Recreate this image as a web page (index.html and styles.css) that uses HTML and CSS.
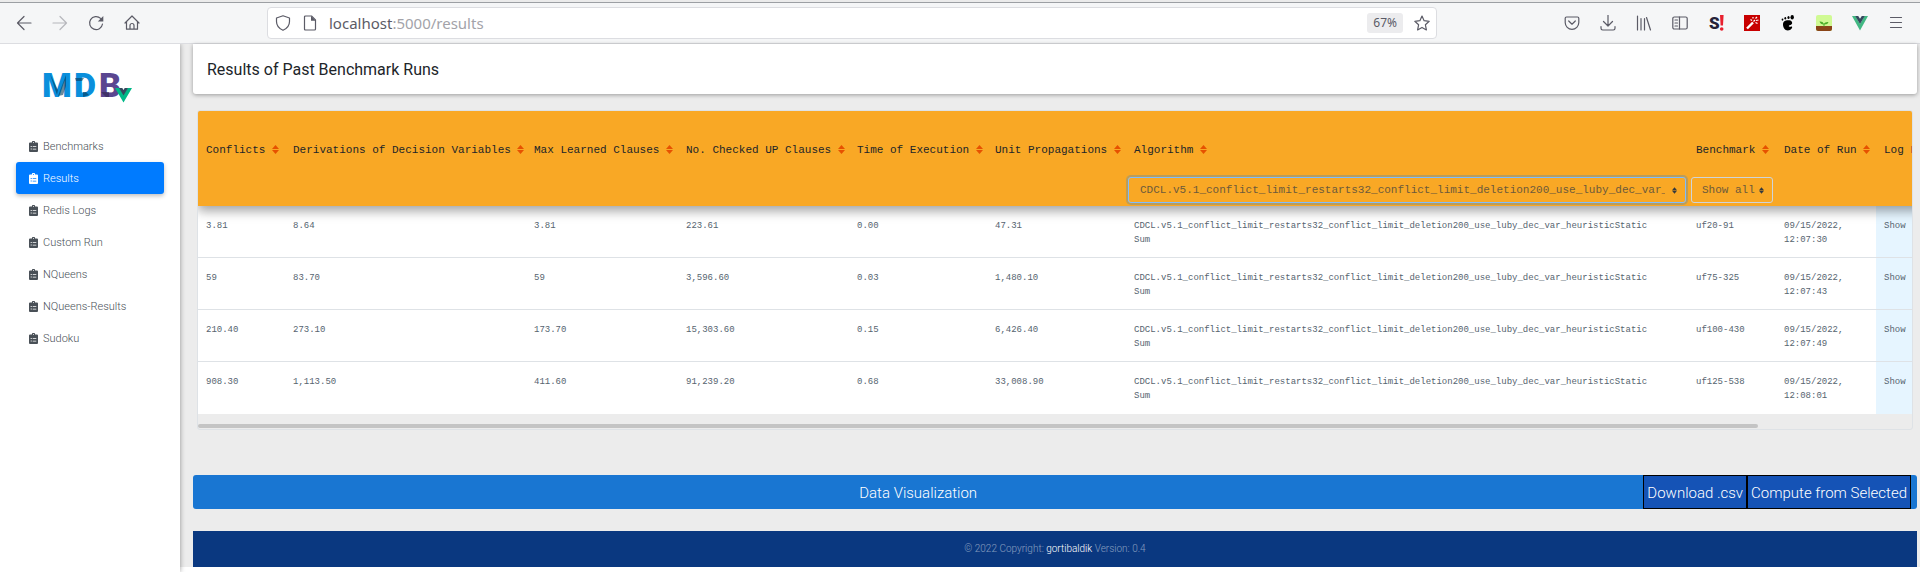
FILE: index.html
```
<!DOCTYPE html>
<html lang="en">
<head>
<meta charset="utf-8">
<title>Results of Past Benchmark Runs</title>
<link rel="stylesheet" href="styles.css">
</head>
<body>
<svg class="defs" aria-hidden="true">
  <symbol id="clip" viewBox="0 0 9 11"><path fill-rule="evenodd" d="M1 1.4h1.9a1.6 1.6 0 0 1 3.2 0H8a1 1 0 0 1 1 1V10a1 1 0 0 1-1 1H1a1 1 0 0 1-1-1V2.4a1 1 0 0 1 1-1zM4.5.9a.5.5 0 1 0 0 1 .5.5 0 0 0 0-1zM1.7 5v.9h1V5zm2 0v.8h3.6V5zm-2 2.6v.9h1v-.9zm2 .1v.8h3.6v-.8z"/></symbol>
  <symbol id="sort" viewBox="0 0 7 9"><path d="M0 4 3.5 0 7 4zM0 5h7L3.5 9z"/></symbol>
</svg>
<header class="toolbar">
  <nav class="tools" aria-label="Browser">
    <button class="tool" aria-label="Back"><svg class="ico" viewBox="0 0 16 16"><path d="M15 8H1.5M8 1.5 1.5 8 8 14.5"/></svg></button>
    <button class="tool dim" aria-label="Forward"><svg class="ico" viewBox="0 0 16 16"><path d="M1 8h13.500M8 1.500 14.500 8 8 14.500"/></svg></button>
    <button class="tool" aria-label="Reload"><svg class="ico" viewBox="0 0 16 16"><path d="M14.500 9A6.500 6.500 0 1 1 12.600 3.400"/><path class="solid" d="M15.300 1v5.500H9.800z"/></svg></button>
    <button class="tool" aria-label="Home"><svg class="ico" viewBox="0 0 16 16"><path d="M1 8 8 1l7 7M2.500 7v7.200h11V7M6 14V10.500a2 2 0 0 1 4 0V14"/></svg></button>
  </nav>
  <div class="urlbar">
    <svg class="ico" viewBox="0 0 16 16"><path d="M8 .8 14.500 3v3.500c0 4-2.500 7-6.500 8.800C4 13.500 1.500 10.500 1.500 6.500V3z"/></svg>
    <svg class="ico" viewBox="0 0 16 16"><path d="M3.500 1h6L13.500 5v9q0 1-1 1h-9q-1 0-1-1V2q0-1 1-1z"/><path class="solid" d="M9 1v4.700h4.500z"/></svg>
    <span class="url"><span class="host">localhost</span>:5000/results</span>
    <span class="zoom">67%</span>
    <svg class="ico" viewBox="0 0 16 16"><path d="m8 1 2.100 4.700 5.100.6-3.800 3.500 1 5.100L8 12.400l-4.400 2.500 1-5.100L.8 6.300l5.100-.6z"/></svg>
  </div>
  <nav class="tools" aria-label="Extensions">
    <button class="tool" aria-label="Pocket"><svg class="ico" viewBox="0 0 16 16"><path d="M2.500 2h11q1.300 0 1.300 1.300V7.500a6.800 6.800 0 0 1-13.600 0V3.300Q1.200 2 2.500 2zM4.700 6 8 9.200 11.300 6"/></svg></button>
    <button class="tool" aria-label="Downloads"><svg class="ico" viewBox="0 0 16 16"><path d="M8 0v10.500M3.500 6.500 8 11l4.500-4.500M1 11.500v1.800q0 1.700 1.700 1.700h10.600q1.700 0 1.700-1.700v-1.800"/></svg></button>
    <button class="tool" aria-label="Library"><svg class="ico" viewBox="0 0 16 16"><path d="M1.500 1v14M5 3.500V15M8.500 3.500V15M10.500 2.500l4 12.500"/></svg></button>
    <button class="tool" aria-label="Sidebars"><svg class="ico" viewBox="0 0 16 16"><rect x=".8" y="2" width="14.400" height="12" rx="1.500"/><path d="M7.500 2v12M3 5h2.500M3 8h2.500M3 11h2.500"/></svg></button>
    <button class="tool" aria-label="S extension"><svg class="pic" viewBox="0 0 16 16"><text x="1" y="14" class="ess">S</text><path fill="#e8202e" d="M12 0h3.600l-.6 10.500h-2.400zM11.900 14a1.800 1.800 0 1 0 3.600 0 1.800 1.800 0 0 0-3.600 0z"/></svg></button>
    <button class="tool" aria-label="Wand"><svg class="pic" viewBox="0 0 16 16"><path fill="#c80000" d="M0 0h16v16H0z"/><path d="M3 13.500 9 7.500" stroke="#fff" stroke-width="2.400"/><path d="m9.500 6.500 1.500-1.500M6.500 4.500l1.500 1M11.500 7.500l2 1M12 5.500l2.500-.5M9 3.500V2M11.500 3.500l1.500-1.500" stroke="#fff" stroke-width="1.200"/></svg></button>
    <button class="tool" aria-label="Foot"><svg class="pic" viewBox="0 0 16 16"><path d="M11.800 6.800C13 9 11 10 9.500 10.300c-1.200.4-.8 1.600.4 1.500 1-.2 1.500-.7 2-.2 1 .9-.9 3.900-4 3.900C4.500 15.500 3 12 3 9.500c0-3 2.200-4.200 5-4.200 2 0 3.200.4 3.800 1.500z"/><ellipse cx="12.200" cy="2.300" rx="1.700" ry="2.200"/><ellipse cx="8.500" cy="2.500" rx="1.100" ry="1.600"/><ellipse cx="5.300" cy="3.300" rx=".9" ry="1.300"/><ellipse cx="2.500" cy="4.600" rx=".9" ry="1.100"/></svg></button>
    <button class="tool" aria-label="Plant"><svg class="pic" viewBox="0 0 16 16"><rect width="16" height="16" rx="2" fill="#d0fa94"/><path fill="#8a4518" d="M0 11h16v3q0 2-2 2H2q-2 0-2-2z"/><path fill="#4caf28" d="M7.500 11.500V9.500Q4.500 9.500 3.500 6.500q3.500-.3 4.300 2.200Q9 6.700 12.500 7q-.7 2.500-4 2.500v2z"/></svg></button>
    <button class="tool" aria-label="Vue"><svg class="pic" viewBox="0 0 16 16"><path fill="#41b883" d="M0 1h3.500L8 9l4.500-8H16L8 15.500z"/><path fill="#35495e" d="M3.200 1h3L8 3.800 9.800 1h3L8 9z"/></svg></button>
    <button class="tool" aria-label="Menu"><svg class="ico" viewBox="0 0 16 16"><path d="M2.500 2.500h11M2.500 7.500h11M2.500 12.500h11"/></svg></button>
  </nav>
</header>
<div class="app">
  <aside class="side">
    <svg class="logo" viewBox="0 0 90 34" role="img" aria-label="MDB Vue">
      <text x="-1" y="27" fill="#0a8fdc">M</text>
      <path fill="#063a5a" opacity=".6" d="m7 4 7 21 1-5zM23 5l-8 21 5-1 3-9z"/>
      <text x="31" y="27" fill="#0a8fdc">D</text>
      <path fill="#063a5a" opacity=".6" d="M32 8h9l-2 3h-6zM40 22v5l6-2-3-3z"/>
      <text x="56" y="27" fill="#5a4690">B</text>
      <path fill="#31244f" opacity=".6" d="M58 22h8v5h-3z"/>
      <path fill="#00b887" d="M72 18h4.500l4 6 4-6H89l-8.500 14.500z"/><path fill="#35495e" d="M76 18h3.300l1.200 2 1.200-2H85l-4.500 7.500z"/>
    </svg>
    <nav class="menu">
      <a href="#"><svg><use href="#clip"/></svg>Benchmarks</a>
      <a href="#" class="active"><svg><use href="#clip"/></svg>Results</a>
      <a href="#"><svg><use href="#clip"/></svg>Redis Logs</a>
      <a href="#"><svg><use href="#clip"/></svg>Custom Run</a>
      <a href="#"><svg><use href="#clip"/></svg>NQueens</a>
      <a href="#"><svg><use href="#clip"/></svg>NQueens-Results</a>
      <a href="#"><svg><use href="#clip"/></svg>Sudoku</a>
    </nav>
  </aside>
  <main class="main">
    <h1 class="title">Results of Past Benchmark Runs</h1>
    <section class="results">
      <table>
        <colgroup><col class="c1"><col class="c2"><col class="c3"><col class="c4"><col class="c5"><col class="c6"><col><col class="c8"><col class="c9"><col class="c10"></colgroup>
        <thead>
          <tr class="names">
            <th>Conflicts <svg><use href="#sort"/></svg></th>
            <th>Derivations of Decision Variables <svg><use href="#sort"/></svg></th>
            <th>Max Learned Clauses <svg><use href="#sort"/></svg></th>
            <th>No. Checked UP Clauses <svg><use href="#sort"/></svg></th>
            <th>Time of Execution <svg><use href="#sort"/></svg></th>
            <th>Unit Propagations <svg><use href="#sort"/></svg></th>
            <th>Algorithm <svg><use href="#sort"/></svg></th>
            <th>Benchmark <svg><use href="#sort"/></svg></th>
            <th>Date of Run <svg><use href="#sort"/></svg></th>
            <th>Log File</th>
          </tr>
          <tr class="filters">
            <td colspan="6"></td>
            <td><div class="pick focus"><select aria-label="Algorithm"><option>CDCL.v5.1_conflict_limit_restarts32_conflict_limit_deletion200_use_luby_dec_var_heuristicStaticSum</option></select><svg><use href="#sort"/></svg></div></td>
            <td><div class="pick"><select aria-label="Benchmark"><option>Show all</option></select><svg><use href="#sort"/></svg></div></td>
            <td colspan="2"></td>
          </tr>
        </thead>
        <tbody>
          <tr><td>3.81</td><td>8.64</td><td>3.81</td><td>223.61</td><td>0.00</td><td>47.31</td><td>CDCL.v5.1_conflict_limit_restarts32_conflict_limit_deletion200_use_luby_dec_var_heuristicStatic<br>Sum</td><td>uf20-91</td><td>09/15/2022,<br>12:07:30</td><td class="log">Show</td></tr>
          <tr><td>59</td><td>83.70</td><td>59</td><td>3,596.60</td><td>0.03</td><td>1,480.10</td><td>CDCL.v5.1_conflict_limit_restarts32_conflict_limit_deletion200_use_luby_dec_var_heuristicStatic<br>Sum</td><td>uf75-325</td><td>09/15/2022,<br>12:07:43</td><td class="log">Show</td></tr>
          <tr><td>210.40</td><td>273.10</td><td>173.70</td><td>15,303.60</td><td>0.15</td><td>6,426.40</td><td>CDCL.v5.1_conflict_limit_restarts32_conflict_limit_deletion200_use_luby_dec_var_heuristicStatic<br>Sum</td><td>uf100-430</td><td>09/15/2022,<br>12:07:49</td><td class="log">Show</td></tr>
          <tr><td>908.30</td><td>1,113.50</td><td>411.60</td><td>91,239.20</td><td>0.68</td><td>33,008.90</td><td>CDCL.v5.1_conflict_limit_restarts32_conflict_limit_deletion200_use_luby_dec_var_heuristicStatic<br>Sum</td><td>uf125-538</td><td>09/15/2022,<br>12:08:01</td><td class="log">Show</td></tr>
        </tbody>
      </table>
      <div class="track"><div class="thumb"></div></div>
    </section>
    <div class="actions">
      <span class="viz">Data Visualization</span>
      <button>Download .csv</button>
      <button>Compute from Selected</button>
    </div>
    <footer class="foot">© 2022 Copyright: <a href="#">gortibaldik</a> Version: 0.4</footer>
  </main>
</div>
</body>
</html>
```
FILE: styles.css
```
* { box-sizing: border-box; }
body { margin: 0; background: #fff; font-family: Roboto, sans-serif; font-weight: 300; min-height: 100vh; display: flex; flex-direction: column; overflow: hidden; }
button, select { font: inherit; margin: 0; }
a { text-decoration: none; }
.defs { display: none; }

.toolbar { height: 44px; flex: none; display: flex; align-items: center; padding: 4px 6px 1px; background: #f5f6f7; border-bottom: 1px solid #dcdde1; box-shadow: inset 0 2px #ebebeb, inset 0 3px #9c9fa3; }
.tools { display: flex; }
.tool { width: 36px; height: 32px; padding: 0; border: 0; background: none; display: grid; place-items: center; }
.dim { opacity: .4; }
.ico { width: 16px; height: 16px; flex: none; fill: none; stroke: #5b5b66; stroke-width: 1.2; stroke-linecap: round; stroke-linejoin: round; }
.ico .solid { fill: #5b5b66; stroke: none; }
.pic { width: 16px; height: 16px; overflow: visible; }
.ess { font: 900 17px Roboto, sans-serif; fill: #262238; }
.urlbar { flex: 1; min-width: 0; height: 32px; margin: 0 117px; padding: 0 6px 0 7px; display: flex; align-items: center; gap: 11px; background: #fff; border: 1px solid #dcdde1; border-radius: 4px; }
.url { flex: 1; font: 400 15px "Noto Sans", sans-serif; color: #a3a3a9; }
.host { color: #5b5b66; }
.zoom { padding: 0 6px; border-radius: 3px; background: #ececee; color: #5b5b66; font: 400 12px/20px "Noto Sans", sans-serif; }

.app { flex: 1; display: flex; }
.side { position: relative; width: 180px; flex: none; padding: 26px 16px 0; background: #fff; box-shadow: 0 0 5px rgba(0, 0, 0, .4); clip-path: inset(0 -10px 0 0); }
.logo { display: block; width: 90px; height: 34px; margin: 0 auto 26px 27px; overflow: visible; font: 900 34px Roboto, sans-serif; }
.menu { display: flex; flex-direction: column; }
.menu a { display: flex; align-items: center; gap: 5px; height: 32px; padding-left: 13px; border-radius: 3px; color: #495057; font-size: 11px; }
.menu svg { width: 9px; height: 11px; fill: #495057; }
.menu .active { background: #007bff; color: #fff; box-shadow: 0 2px 4px rgba(0, 0, 0, .25); }
.menu .active svg { fill: #fff; }

.main { flex: 1; min-width: 0; margin-bottom: 5px; padding: 0 3px 0 13px; background: #ececec; }
.title { margin: 0 0 16px; padding: 15px 14px 13px; background: #fff; border-radius: 0 0 3px 3px; box-shadow: 0 1px 4px rgba(0, 0, 0, .35); color: #212529; font-size: 16px; line-height: 22px; font-weight: 400; }
.results { margin: 0 4px 45px; border: 1px solid #dee2e6; border-radius: 3px; overflow: hidden; font-family: "Liberation Mono", monospace; font-weight: 400; }
table { width: 100%; min-width: 1880px; table-layout: fixed; border-collapse: separate; border-spacing: 0; }
.c1 { width: 87px; } .c2 { width: 241px; } .c3 { width: 152px; } .c4 { width: 171px; } .c5 { width: 138px; }
.c6 { width: 139px; } .c8 { width: 88px; } .c9 { width: 100px; } .c10 { width: 202px; }
thead { position: relative; background: #f9a825; box-shadow: 0 5px 11px rgba(0, 0, 0, .25), 0 4px 10px rgba(0, 0, 0, .15); }
th { height: 63px; padding: 14px 0 0 8px; text-align: left; font-weight: 400; font-size: 11px; line-height: 16px; color: #212529; white-space: nowrap; }
th svg { width: 7px; height: 9px; fill: #e65100; vertical-align: -1px; }
.filters td { height: 32px; padding: 0; }
.pick { position: relative; margin: 0 3px; font-size: 11px; }
.pick select { display: block; width: 100%; height: 26px; padding: 0 14px 0 10px; appearance: none; background: none; border: 1px solid #ced4da; border-radius: 3px; color: #6c5a3c; }
.pick svg { position: absolute; right: 9px; top: 10px; width: 5px; height: 7px; fill: #343a40; }
.focus { margin: 0 2px; }
.focus select { padding: 0 20px 0 11px; border-color: #80bdff; box-shadow: 0 0 0 2px rgba(0, 123, 255, .25); }
tbody td { height: 52px; padding: 13px 0 10px 8px; vertical-align: top; background: #fff; border-bottom: 1px solid #dee2e6; color: #56646f; font-size: 9px; line-height: 14px; white-space: nowrap; }
tbody tr:last-child td { border-bottom: 0; }
tbody .log { background: #e6f5ff; }
.track { padding: 10px 0 1px; }
.thumb { width: 91%; height: 4px; border-radius: 2px; background: #c4c4c4; }
.actions { display: flex; height: 34px; margin-bottom: 22px; padding-right: 6px; background: #1976d2; border-radius: 3px; color: #fff; font-size: 15px; line-height: 36px; }
.viz { flex: 1; text-align: center; }
.actions button { padding: 2px 3px 0; background: #1553b6; border: 1px solid #000; color: #fff; line-height: 30px; }
.foot { height: 36px; background: #0a3880; color: rgba(255, 255, 255, .5); font-size: 10px; line-height: 36px; text-align: center; }
.foot a { color: #fff; }
```
